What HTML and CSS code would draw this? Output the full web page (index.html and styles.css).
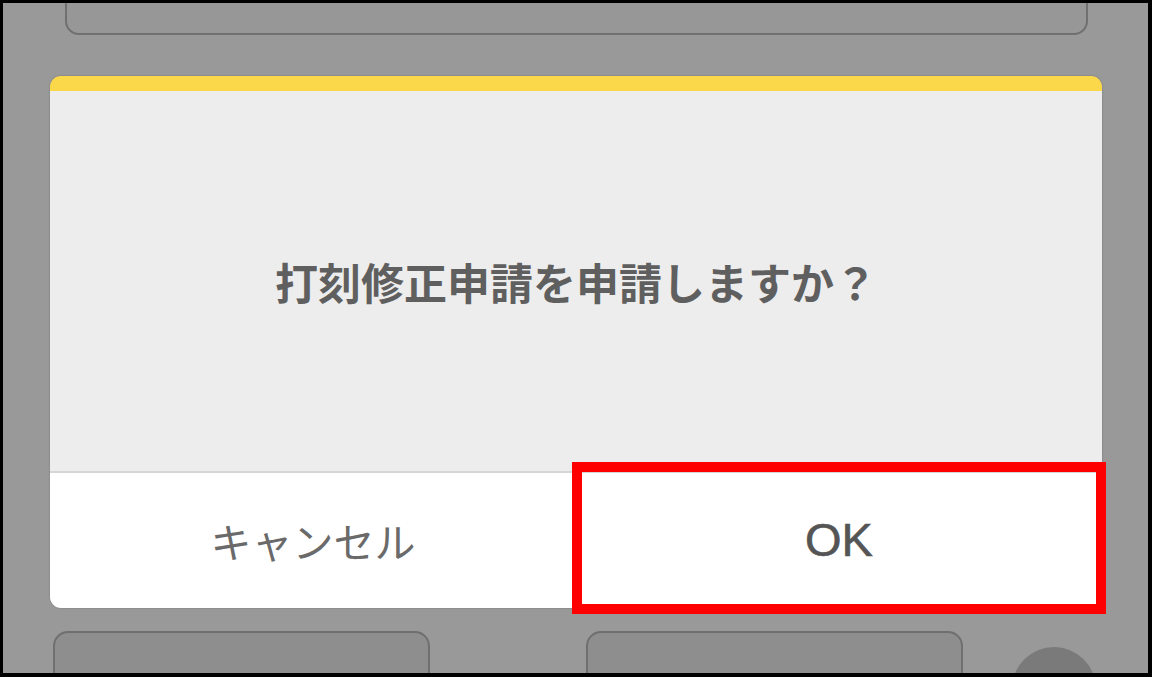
FILE: index.html
```html
<!DOCTYPE html>
<html lang="ja">
<head>
<meta charset="utf-8">
<title>打刻修正申請</title>
<link rel="stylesheet" href="styles.css">
</head>
<body>
<div class="frame">
  <div class="top-card"></div>
  <div class="dialog">
    <div class="dialog-accent"></div>
    <div class="dialog-body">
      <p class="dialog-message">打刻修正申請を申請しますか？</p>
    </div>
    <div class="dialog-actions">
      <button class="action action-cancel">キャンセル</button>
      <button class="action action-ok">OK</button>
    </div>
    <div class="highlight"></div>
  </div>
  <div class="bottom-row">
    <div class="bottom-card card-left"></div>
    <div class="bottom-card card-right"></div>
    <div class="fab"></div>
  </div>
</div>
</body>
</html>
```
FILE: styles.css
```css
html, body {
  margin: 0;
  padding: 0;
  background: #000;
}

.frame {
  box-sizing: border-box;
  width: 1152px;
  height: 677px;
  border-style: solid;
  border-color: #000;
  border-width: 3px 4px 4px 3px;
  background: #999999;
  overflow: hidden;
  display: flex;
  flex-direction: column;
  font-family: "Noto Sans CJK JP", "Noto Sans", sans-serif;
}

.top-card {
  box-sizing: border-box;
  height: 50px;
  margin: -18px 0 0 62px;
  width: 1023px;
  border: 2px solid #707070;
  border-radius: 14px;
  background: #979797;
  flex: none;
}

.dialog {
  position: relative;
  flex: none;
  margin: 41px 0 0 47px;
  width: 1052px;
  height: 532px;
  border-radius: 11px;
  display: flex;
  flex-direction: column;
  box-shadow: 0 0 2px rgba(0,0,0,0.25);
}

.dialog-accent {
  height: 15px;
  background: #fbd84a;
  border-radius: 11px 11px 0 0;
  flex: none;
}

.dialog-body {
  flex: none;
  height: 380px;
  background: #ededed;
  border-bottom: 2px solid #d6d6d6;
  display: flex;
  align-items: center;
  justify-content: center;
}

.dialog-message {
  margin: 0;
  font-size: 43px;
  font-weight: 700;
  color: #5f5f5f;
}

.dialog-actions {
  flex: 1;
  display: grid;
  grid-template-columns: 1fr 1fr;
  background: #fff;
  border-radius: 0 0 11px 11px;
}

.action {
  border: 0;
  background: transparent;
  padding: 0 0 2px 0;
  font-family: "Noto Sans CJK JP", "Noto Sans", sans-serif;
  display: flex;
  align-items: center;
  justify-content: center;
}

.action-cancel {
  font-size: 41px;
  font-weight: 400;
  color: #6a6a6a;
}

.action-ok {
  font-family: "Liberation Sans", Arial, sans-serif;
  font-size: 47px;
  font-weight: 400;
  color: #555;
  -webkit-text-stroke: 0.6px #555;
}

.highlight {
  position: absolute;
  left: 522px;
  top: 386px;
  width: 534px;
  height: 152px;
  box-sizing: border-box;
  border: 10px solid #ff0000;
  pointer-events: none;
}

.bottom-row {
  flex: none;
  display: flex;
  align-items: flex-start;
  margin: 23px 0 0 50px;
}

.bottom-card {
  box-sizing: border-box;
  height: 70px;
  border: 2px solid #6f6f6f;
  border-radius: 15px;
  background: #8e8e8f;
}

.card-left {
  width: 377px;
}

.card-right {
  width: 377px;
  margin-left: 156px;
}

.fab {
  width: 84px;
  height: 84px;
  border-radius: 50%;
  background: #7a7a7a;
  margin: 16px 0 0 49px;
}
```
